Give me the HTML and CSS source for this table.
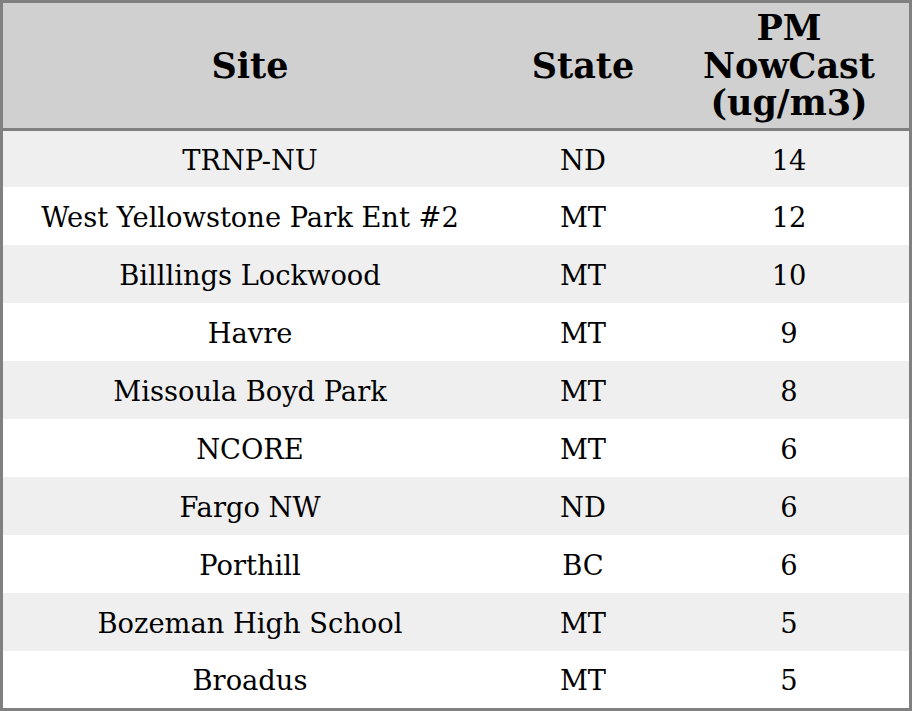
FILE: index.html
```html
<!DOCTYPE html>
<html>
<head>
<meta charset="utf-8">
<link rel="stylesheet" href="styles.css">
</head>
<body>
<div class="frame">
<table class="tbl">
  <colgroup>
    <col class="c-site">
    <col class="c-state">
    <col class="c-pm">
  </colgroup>
  <thead>
    <tr><th>Site</th><th>State</th><th>PM<br>NowCast<br>(ug/m3)</th></tr>
  </thead>
  <tbody>
    <tr class="first"><td>TRNP-NU</td><td>ND</td><td>14</td></tr>
    <tr><td>West Yellowstone Park Ent #2</td><td>MT</td><td>12</td></tr>
    <tr><td>Billlings Lockwood</td><td>MT</td><td>10</td></tr>
    <tr><td>Havre</td><td>MT</td><td>9</td></tr>
    <tr><td>Missoula Boyd Park</td><td>MT</td><td>8</td></tr>
    <tr><td>NCORE</td><td>MT</td><td>6</td></tr>
    <tr><td>Fargo NW</td><td>ND</td><td>6</td></tr>
    <tr><td>Porthill</td><td>BC</td><td>6</td></tr>
    <tr><td>Bozeman High School</td><td>MT</td><td>5</td></tr>
    <tr class="last"><td>Broadus</td><td>MT</td><td>5</td></tr>
  </tbody>
</table>
</div>
</body>
</html>
```
FILE: styles.css
```css
html, body {
  margin: 0;
  padding: 0;
  background: #ffffff;
}
.frame {
  box-sizing: border-box;
  width: 912px;
  height: 711px;
  border: 3px solid #808080;
  overflow: hidden;
}
.tbl {
  width: 906px;
  border-collapse: separate;
  border-spacing: 0;
  font-family: "DejaVu Serif", serif;
  color: #000;
  table-layout: fixed;
}
.c-site { width: 494px; }
.c-state { width: 172px; }
.c-pm { width: 240px; }
thead tr {
  background: #d0d0d0;
}
th {
  box-sizing: border-box;
  height: 128px;
  font-size: 35px;
  font-weight: bold;
  line-height: 37.5px;
  text-align: center;
  vertical-align: middle;
  border-bottom: 3px solid #808080;
  padding: 0;
}
td {
  box-sizing: border-box;
  font-size: 27.3px;
  text-align: center;
  vertical-align: middle;
  padding: 2px 0 0 0;
  height: 58px;
}
tr.first td { height: 56px; }
tr.last td { height: 57px; }
tbody tr:nth-child(odd) { background: #efefef; }
tbody tr:nth-child(even) { background: #ffffff; }
```
